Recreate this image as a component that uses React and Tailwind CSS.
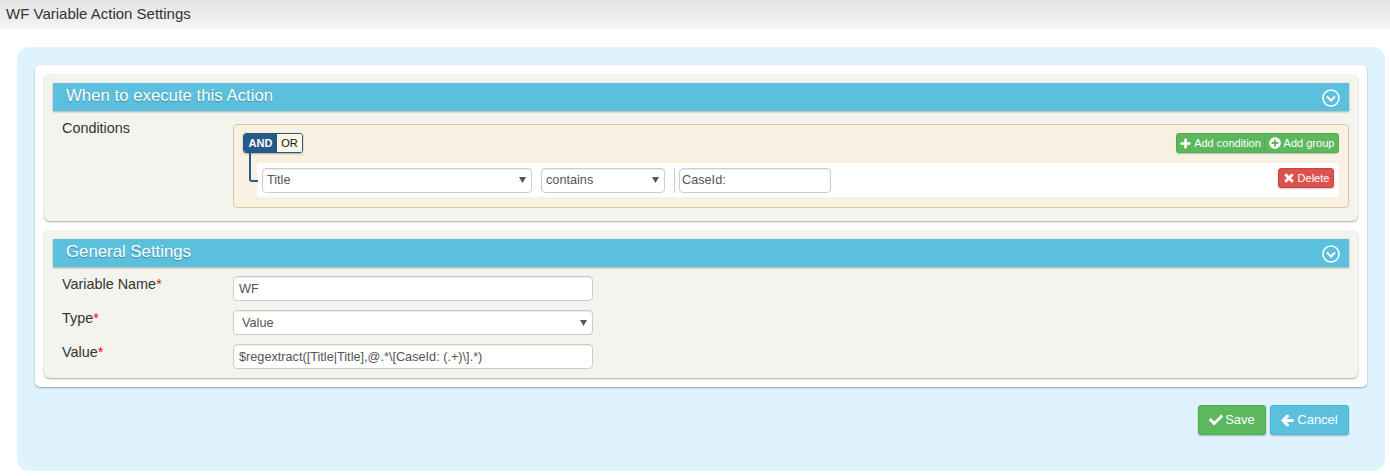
import React from 'react';
import { FaPlus, FaPlusCircle, FaTimes, FaCheck, FaArrowLeft } from 'react-icons/fa';

const Caret = () => (
    <svg className="absolute right-[5px] top-1/2 -translate-y-1/2 pointer-events-none" width="8" height="7" viewBox="0 0 8 7">
        <path d="M0 0.5h7L3.5 6.5z" fill="#555555" />
    </svg>
);

const SelectBox = ({ value, className, paddingClass = 'pl-[4px] pt-[2px]' }) => (
    <div className={`relative h-[25px] shrink-0 ${className}`}>
        <select
            defaultValue={value}
            className={`block appearance-none w-full h-full ${paddingClass} bg-white border border-[#cccccc] rounded-[4px] text-[12.7px] text-[#555555] outline-none shadow-[inset_0_1px_1px_rgba(0,0,0,0.075)]`}
        >
            <option>{value}</option>
        </select>
        <Caret />
    </div>
);

const TextBox = ({ value, className }) => (
    <input
        type="text"
        readOnly
        value={value}
        className={`block h-[25px] px-[5px] bg-white border border-[#cccccc] rounded-[4px] text-[12.7px] text-[#555555] outline-none shadow-[inset_0_1px_1px_rgba(0,0,0,0.075)] ${className}`}
    />
);

const SectionBar = ({ title }) => (
    <div className="flex items-center justify-between h-[28px] pl-[13px] pr-[9px] bg-[#5bc0de] shadow-[0_1px_2px_rgba(0,0,0,0.3)]">
        <span className="-mt-[2px] text-[16.8px] text-white [text-shadow:0_1px_1px_rgba(0,0,0,0.3)]">{title}</span>
        <svg className="mt-[2px]" width="18" height="18" viewBox="0 0 18 18" fill="none" stroke="white">
            <circle cx="9" cy="9" r="8" strokeWidth="1.5" />
            <path d="M5 7.5l4 4 4-4" strokeWidth="2" />
        </svg>
    </div>
);

const Label = ({ children, required }) => (
    <div className="w-[171px] -mt-[2px] pl-[9px] shrink-0 text-[14.4px] leading-[20px] text-[#333333]">
        {children}
        {required && <span className="text-[#ff0000]">*</span>}
    </div>
);

const SectionPanel = ({ children, className }) => (
    <div className={`p-[9px] bg-[#f4f4ef] rounded-[6px] shadow-[0_1px_2px_rgba(0,0,0,0.35)] ${className}`}>
        {children}
    </div>
);

const App = () => {
    return (
        <div className="w-[1390px] h-[476px] bg-white overflow-hidden font-['Liberation_Sans',Arial,sans-serif]">
            <header className="h-[29px] pl-[6px] flex items-center bg-gradient-to-b from-[#e4e3e3] to-[#f5f5f5] text-[15px] text-[#333333]">
                WF Variable Action Settings
            </header>

            <main className="mt-[18px] ml-[17px] w-[1368px] h-[424px] p-[18px] bg-[#dff3fe] rounded-[12px]">
                <div className="h-[322px] p-[9px] bg-white rounded-[5px] shadow-[0_1px_2px_rgba(0,0,0,0.35)]">
                    <SectionPanel className="h-[147px]">
                        <SectionBar title="When to execute this Action" />
                        <div className="flex mt-[13px]">
                            <div className="w-[180px] shrink-0 pl-[9px] text-[14.4px] leading-[20px] text-[#333333] -mt-[6px]">Conditions</div>
                            <div className="relative w-[1116px] h-[84px] px-[9px] pt-[8px] bg-[#f8f1e2] border border-[#dcc896] rounded-[4px]">
                                <div className="flex justify-between">
                                    <div className="flex h-[20px] rounded-[3px] border border-[#245580] overflow-hidden shadow-[0_1px_2px_rgba(0,0,0,0.3)] text-[11px] font-bold">
                                        <span className="w-[33px] flex items-center justify-center bg-[#265a88] text-white">AND</span>
                                        <span className="w-[25px] flex items-center justify-center bg-[#fdf8e8] text-[#111111] font-normal">OR</span>
                                    </div>
                                    <div className="flex h-[20px] rounded-[3px] bg-[#5cb85c] border border-[#4cae4c] text-white text-[11px] overflow-hidden shadow-[0_1px_1px_rgba(0,0,0,0.2)]">
                                        <span className="w-[88px] flex items-center justify-center gap-[3px] border-r border-[#4cae4c]"><FaPlus size={11} stroke="currentColor" strokeWidth={30} />Add condition</span>
                                        <span className="w-[73px] flex items-center justify-center gap-[3px]"><FaPlusCircle size={12} />Add group</span>
                                    </div>
                                </div>
                                {/* linea entre AND/OR y la regla */}
                                <div className="absolute left-[15px] top-[28px] w-[9px] h-[29px] border-l-2 border-b-2 border-[#265a88] rounded-bl-[3px]" />
                                <div className="flex items-center h-[34px] mt-[10px] ml-[14px] pl-[5px] pr-[5px] bg-white rounded-[3px]">
                                    <SelectBox value="Title" className="w-[270px]" />
                                    <SelectBox value="contains" className="w-[124px] ml-[9px]" />
                                    <div className="w-px h-[25px] ml-[9px] bg-[#cccccc]" />
                                    <TextBox value="CaseId:" className="w-[152px] ml-[4px] !px-[2px]" />
                                    <button className="ml-auto self-start mt-[5px] w-[56px] h-[20px] flex items-center justify-center gap-[3px] bg-[#d9534f] border border-[#d43f3a] rounded-[3px] text-white text-[11px] shadow-[0_1px_1px_rgba(0,0,0,0.2)]">
                                        <FaTimes size={12} stroke="currentColor" strokeWidth={30} />Delete
                                    </button>
                                </div>
                            </div>
                        </div>
                    </SectionPanel>

                    <SectionPanel className="h-[148px] mt-[9px]">
                        <SectionBar title="General Settings" />
                        <div className="flex flex-col gap-[9px] mt-[9px]">
                            <div className="flex">
                                <Label required>Variable Name</Label>
                                <div className="ml-[9px]"><TextBox value="WF" className="w-[360px]" /></div>
                            </div>
                            <div className="flex">
                                <Label required>Type</Label>
                                <SelectBox value="Value" className="w-[360px] ml-[9px]" paddingClass="pl-[8px] pt-[3px]" />
                            </div>
                            <div className="flex">
                                <Label required>Value</Label>
                                <div className="ml-[9px]"><TextBox value="$regextract([Title|Title],@.*\[CaseId: (.+)\].*)" className="w-[360px]" /></div>
                            </div>
                        </div>
                    </SectionPanel>
                </div>

                <div className="flex justify-end gap-[4px] mt-[18px] pr-[18px]">
                    <button className="w-[68px] h-[30px] flex items-center justify-center gap-[2px] bg-[#5cb85c] border border-[#4cae4c] rounded-[3px] text-white text-[13px] shadow-[0_1px_2px_rgba(0,0,0,0.25)]">
                        <FaCheck size={14} />Save
                    </button>
                    <button className="w-[79px] h-[30px] flex items-center justify-center gap-[3px] bg-[#5bc0de] border border-[#46b8da] rounded-[3px] text-white text-[13px] shadow-[0_1px_2px_rgba(0,0,0,0.25)]">
                        <FaArrowLeft size={13} stroke="currentColor" strokeWidth={40} />Cancel
                    </button>
                </div>
            </main>
        </div>
    );
};

export default App;
